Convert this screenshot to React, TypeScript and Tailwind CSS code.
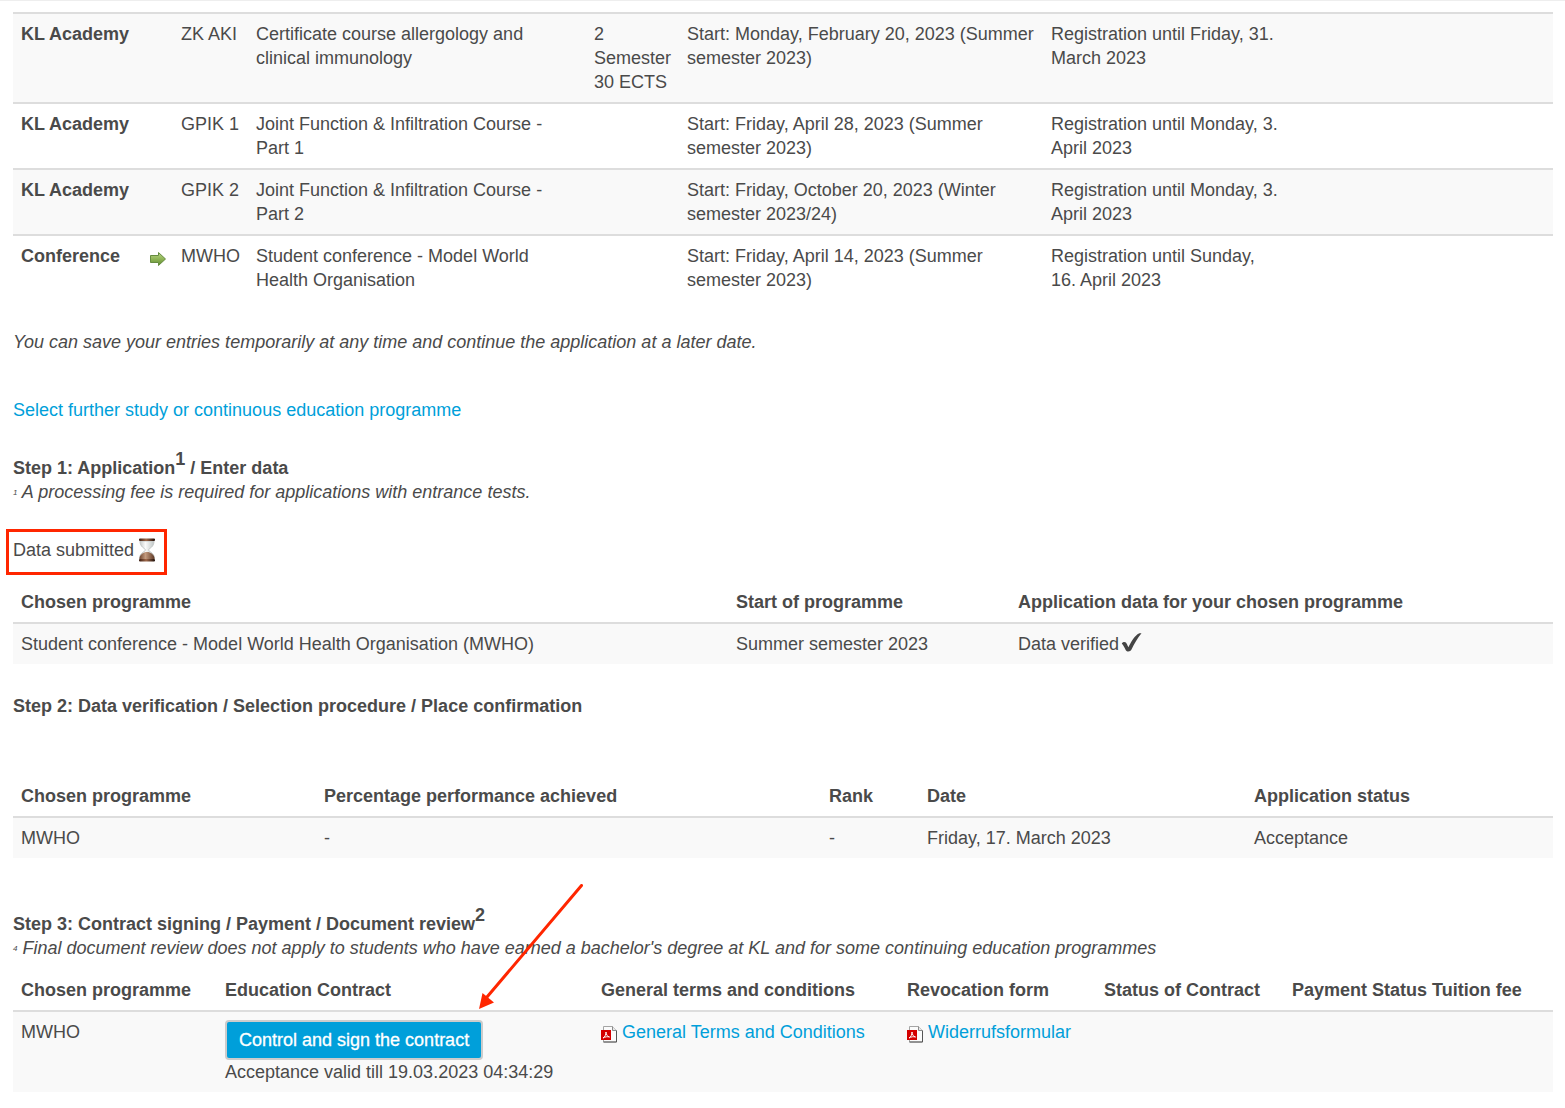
import type { ReactNode } from 'react';

const courses = [
  {
    kind: 'KL Academy', code: 'ZK AKI', title: 'Certificate course allergology and clinical immunology',
    scope: '2 Semester 30 ECTS', start: 'Start: Monday, February 20, 2023 (Summer semester 2023)',
    until: 'Registration until Friday, 31. March 2023', selected: false,
  },
  {
    kind: 'KL Academy', code: 'GPIK 1', title: 'Joint Function & Infiltration Course - Part 1',
    scope: '', start: 'Start: Friday, April 28, 2023 (Summer semester 2023)',
    until: 'Registration until Monday, 3. April 2023', selected: false,
  },
  {
    kind: 'KL Academy', code: 'GPIK 2', title: 'Joint Function & Infiltration Course - Part 2',
    scope: '', start: 'Start: Friday, October 20, 2023 (Winter semester 2023/24)',
    until: 'Registration until Monday, 3. April 2023', selected: false,
  },
  {
    kind: 'Conference', code: 'MWHO', title: 'Student conference - Model World Health Organisation',
    scope: '', start: 'Start: Friday, April 14, 2023 (Summer semester 2023)',
    until: 'Registration until Sunday, 16. April 2023', selected: true,
  },
];

function GreenArrow() {
  return (
    <svg className="mt-2 block" width="18" height="15" viewBox="0 0 18 15" role="img" aria-label="Selected">
      <defs>
        <linearGradient id="green" x1="0" y1="0" x2="0" y2="1">
          <stop offset="0" stopColor="#b9d488" />
          <stop offset="0.5" stopColor="#8fb556" />
          <stop offset="1" stopColor="#5f8a30" />
        </linearGradient>
      </defs>
      <path d="M1.500 3.500h8v-3l7 6.500-7 6.500v-3h-8z" fill="url(#green)" stroke="#668c40" strokeLinejoin="round" />
    </svg>
  );
}

function Hourglass() {
  return (
    <svg className="-ml-0.5 inline-block align-top" width="20" height="24" viewBox="0 0 20 24" role="img" aria-label="Pending">
      <defs>
        <linearGradient id="wood" x1="0" y1="0" x2="1" y2="0">
          <stop offset="0" stopColor="#3a1d12" />
          <stop offset="0.45" stopColor="#a0694a" />
          <stop offset="1" stopColor="#1d0e08" />
        </linearGradient>
        <linearGradient id="sand" x1="0" y1="0" x2="1" y2="0">
          <stop offset="0" stopColor="#6f4630" />
          <stop offset="0.4" stopColor="#c39a7e" />
          <stop offset="1" stopColor="#5e3926" />
        </linearGradient>
        <linearGradient id="glass" x1="0" y1="0" x2="1" y2="0">
          <stop offset="0" stopColor="#c3c7c6" />
          <stop offset="0.4" stopColor="#fafafa" />
          <stop offset="1" stopColor="#bcc3c2" />
        </linearGradient>
      </defs>
      <path d="M3 3C3 9.500 8 10 8.500 12 8 14 2.500 14.500 2.500 21h15c0-6.500-5.500-7-6-9 .5-2 5.500-2.500 5.500-9z" fill="url(#glass)" stroke="#c3c7c7" />
      <path d="M8.500 14C5.500 15 2.500 17 2.500 21h15c0-4-3-6-6-7z" fill="url(#sand)" />
      <rect x="2" y="0.500" width="16" height="2.500" rx="1" fill="url(#wood)" />
      <rect x="2" y="21" width="16" height="2.500" rx="1" fill="url(#wood)" />
    </svg>
  );
}

function Check() {
  return (
    <svg className="ml-0.5 inline-block align-top" width="22" height="22" viewBox="0 0 22 22" role="img" aria-label="Verified">
      <path d="M.8 11.400c.8-1.500 3-2 4.100-.8 1 1.100 1.400 2.800 2.500 4.600C9.600 10.500 13 5 16.500 2.200c1.200-.9 2.600-.9 4-.9C16.400 6.200 13.500 11.500 10.500 17.500c-1 2.300-4.500 2.700-5.700.7C3.700 16 2.800 13.600.8 11.400z" fill="#444" />
    </svg>
  );
}

function PdfIcon() {
  return (
    <svg className="mt-1.5 mr-1 inline-block align-top" width="17" height="17" viewBox="0 0 17 17" aria-hidden="true">
      <path d="M2.500.5h9l4 4v11.500h-13z" fill="#fbfbfb" stroke="#a5a5a5" />
      <path d="M15.500 4.500V16h-13" fill="none" stroke="#555" />
      <path d="M11.500.5v4h4" fill="#e8e8e8" stroke="#8c8c8c" />
      <rect x="0" y="4" width="10" height="10" fill="#d40000" />
      <path d="M2 12c2-1 3-3.500 3-6 0 2.500 1.500 4.500 3.500 5-2-.6-4.500-.2-6.500 1z" fill="none" stroke="#fff" />
    </svg>
  );
}

function PointerArrow() {
  return (
    <svg className="pointer-events-none absolute -top-34 left-63" width="108" height="126" viewBox="0 0 108 126" aria-hidden="true">
      <path d="M104.500 1.500L10 113" stroke="#ff2600" strokeWidth="3" strokeLinecap="round" />
      <path d="M2 125l3.500-16 11.500 9.500z" fill="#ff2600" />
    </svg>
  );
}

const Th = ({ children }: { children: ReactNode }) => (
  <th scope="col" className="p-2 text-left font-bold">{children}</th>
);
const Td = ({ children }: { children?: ReactNode }) => <td className="p-2 align-top">{children}</td>;
const Sup = ({ children }: { children: ReactNode }) => (
  <sup className="relative -top-[9px] align-baseline text-lg leading-none">{children}</sup>
);
const Note = ({ mark, children }: { mark: string; children: ReactNode }) => (
  <p className="italic">
    <sup className="relative -top-[3px] align-baseline text-[8px] leading-none">{mark}</sup> {children}
  </p>
);
const link = 'text-[#009fda] hover:underline';

export default function App() {
  return (
    <main className="border-t border-[#eee] pt-[11px] pr-3 pb-4 pl-[13px] font-['Liberation_Sans',Arial,sans-serif] text-lg leading-6 text-[#4a4a4a]">
      <table className="w-full table-fixed border-collapse">
        <colgroup>
          <col className="w-[128px]" />
          <col className="w-[32px]" />
          <col className="w-[75px]" />
          <col className="w-[338px]" />
          <col className="w-[93px]" />
          <col className="w-[364px]" />
          <col className="w-[247px]" />
          <col />
        </colgroup>
        <tbody>
          {courses.map((c) => (
            <tr key={c.code} className="border-t-2 border-[#ddd] odd:bg-[#f9f9f9]">
              <th scope="row" className="p-2 text-left align-top font-bold whitespace-nowrap">{c.kind}</th>
              <Td>{c.selected && <GreenArrow />}</Td>
              <td className="p-2 align-top whitespace-nowrap">{c.code}</td>
              <Td>{c.title}</Td>
              <Td>{c.scope}</Td>
              <Td>{c.start}</Td>
              <Td>{c.until}</Td>
              <td />
            </tr>
          ))}
        </tbody>
      </table>

      <p className="mt-[30px] italic">You can save your entries temporarily at any time and continue the application at a later date.</p>
      <p className="mt-11"><a href="#programmes" className={link}>Select further study or continuous education programme</a></p>

      <h2 className="mt-[34px] font-bold">Step 1: Application<Sup>1</Sup> / Enter data</h2>
      <Note mark="1">A processing fee is required for applications with entrance tests.</Note>
      <p className="mt-[34px]">
        <span className="relative inline-block">
          Data submitted <Hourglass />
          <span className="absolute -top-[9px] -right-2.5 -bottom-[13px] -left-[7px] border-3 border-[#ff2600]" />
        </span>
      </p>

      <table className="mt-5 w-full table-fixed border-collapse">
        <colgroup>
          <col className="w-[715px]" />
          <col className="w-[282px]" />
          <col />
        </colgroup>
        <thead>
          <tr><Th>Chosen programme</Th><Th>Start of programme</Th><Th>Application data for your chosen programme</Th></tr>
        </thead>
        <tbody>
          <tr className="border-t-2 border-[#ddd] bg-[#f9f9f9]">
            <Td>Student conference - Model World Health Organisation (MWHO)</Td>
            <Td>Summer semester 2023</Td>
            <Td>Data verified<Check /></Td>
          </tr>
        </tbody>
      </table>

      <h2 className="mt-[30px] font-bold">Step 2: Data verification / Selection procedure / Place confirmation</h2>
      <table className="mt-[58px] w-full table-fixed border-collapse">
        <colgroup>
          <col className="w-[303px]" />
          <col className="w-[505px]" />
          <col className="w-[98px]" />
          <col className="w-[327px]" />
          <col />
        </colgroup>
        <thead>
          <tr><Th>Chosen programme</Th><Th>Percentage performance achieved</Th><Th>Rank</Th><Th>Date</Th><Th>Application status</Th></tr>
        </thead>
        <tbody>
          <tr className="border-t-2 border-[#ddd] bg-[#f9f9f9]">
            <Td>MWHO</Td><Td>-</Td><Td>-</Td><Td>Friday, 17. March 2023</Td><Td>Acceptance</Td>
          </tr>
        </tbody>
      </table>

      <h2 className="mt-[54px] font-bold">Step 3: Contract signing / Payment / Document review<Sup>2</Sup></h2>
      <Note mark="4">Final document review does not apply to students who have earned a bachelor's degree at KL and for some continuing education programmes</Note>
      <table className="mt-2.5 w-full table-fixed border-collapse">
        <colgroup>
          <col className="w-[204px]" />
          <col className="w-[376px]" />
          <col className="w-[306px]" />
          <col className="w-[197px]" />
          <col className="w-[188px]" />
          <col />
        </colgroup>
        <thead>
          <tr>
            <Th>Chosen programme</Th><Th>Education Contract</Th><Th>General terms and conditions</Th>
            <Th>Revocation form</Th><Th>Status of Contract</Th><Th>Payment Status Tuition fee</Th>
          </tr>
        </thead>
        <tbody>
          <tr className="border-t-2 border-[#ddd] bg-[#f9f9f9]">
            <Td>MWHO</Td>
            <Td>
              <div className="relative">
                <button type="button" className="block h-10 cursor-pointer rounded border-2 border-[#ccc] bg-[#009fda] px-3 whitespace-nowrap text-white [-webkit-text-stroke:0.3px_white]">
                  Control and sign the contract
                </button>
                <PointerArrow />
              </div>
              <p>Acceptance valid till 19.03.2023 04:34:29</p>
            </Td>
            <Td><a href="#terms" className={link}><PdfIcon />General Terms and Conditions</a></Td>
            <Td><a href="#revocation" className={link}><PdfIcon />Widerrufsformular</a></Td>
            <Td /><Td />
          </tr>
        </tbody>
      </table>
    </main>
  );
}
